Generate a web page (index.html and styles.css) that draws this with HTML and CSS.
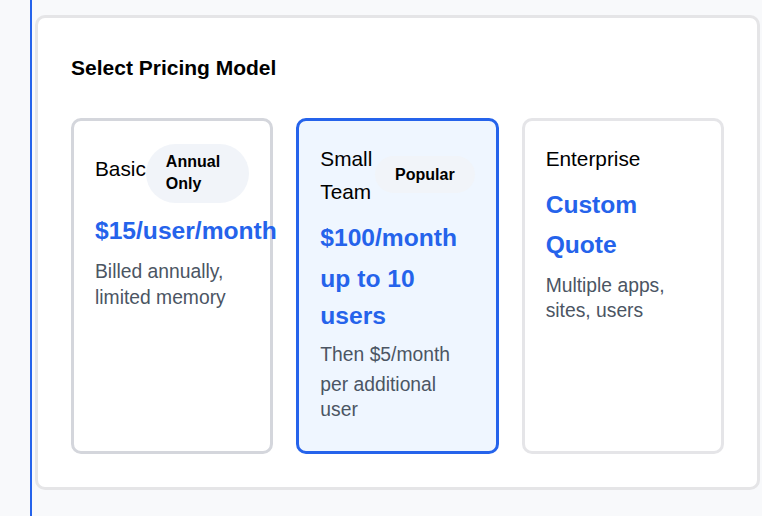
FILE: index.html
```html
<!DOCTYPE html>
<html lang="en">
<head>
<meta charset="utf-8">
<title>Select Pricing Model</title>
<link rel="stylesheet" href="styles.css">
</head>
<body>
<main class="shell">
  <section class="panel">
    <h2 class="panel-title">Select Pricing Model</h2>
    <div class="plans">
      <div class="plan">
        <div class="plan-head">
          <span class="plan-name">Basic</span>
          <span class="badge">Annual Only</span>
        </div>
        <div class="plan-price">$15/user/month</div>
        <p class="plan-desc">Billed annually, limited memory</p>
      </div>
      <div class="plan plan-selected">
        <div class="plan-head">
          <span class="plan-name">Small Team</span>
          <span class="badge">Popular</span>
        </div>
        <div class="plan-price">$100/month <span class="price-sub">up to 10 users</span></div>
        <p class="plan-desc"><span class="desc-lead">Then $5/month</span> per additional user</p>
      </div>
      <div class="plan plan-muted">
        <div class="plan-head">
          <span class="plan-name">Enterprise</span>
        </div>
        <div class="plan-price">Custom Quote</div>
        <p class="plan-desc">Multiple apps, sites, users</p>
      </div>
    </div>
  </section>
</main>
</body>
</html>
```
FILE: styles.css
```css
* { box-sizing: border-box; }

html, body {
  margin: 0;
  padding: 0;
  background: #f8f9fb;
  font-family: "Liberation Sans", Arial, sans-serif;
  color: #000;
}

.shell {
  margin-left: 30px;
  border-left: 2.5px solid #2563eb;
  padding: 15px 2px 0 3px;
  min-height: 100vh;
}

.panel {
  background: #fff;
  border: 3px solid #e5e5e7;
  border-radius: 10px;
  padding: 33px 33px 33px 32px;
}

.panel-title {
  margin: 0 0 33px 1px;
  font-size: 21px;
  line-height: 1.6;
  font-weight: 700;
}

.plans {
  display: grid;
  grid-template-columns: repeat(3, minmax(0, 1fr));
  gap: 23px;
  padding-left: 1px;
}

.plan {
  border: 3px solid #d4d6dc;
  border-radius: 10px;
  background: #fff;
  padding: 21px 21px 29px;
}

.plan-selected {
  border-color: #2563eb;
  background: #eff6ff;
}

.plan-muted {
  border-color: #e5e5e8;
}

.plan-head {
  display: flex;
  align-items: center;
}

.plan-name {
  font-size: 20.8px;
  line-height: 1.6;
}

.badge {
  background: #f1f4f9;
  border-radius: 9999px;
  padding: 7.5px 20px;
  font-size: 16px;
  line-height: 22px;
  font-weight: 700;
}

.plan:first-child .plan-head {
  margin-top: 2px;
  align-items: flex-start;
}

.plan:first-child .plan-name {
  margin-top: 8px;
}

.plan-price {
  margin-top: 10px;
  font-size: 24.6px;
  line-height: 40px;
  font-weight: 700;
  color: #2563eb;
  white-space: nowrap;
}

.plan:first-child .plan-price {
  margin-top: 8px;
}

.price-sub {
  display: block;
  white-space: normal;
  margin-top: 3px;
  line-height: 36.5px;
}

.plan-muted .plan-price {
  white-space: normal;
}

.plan-desc {
  margin: 8px 0 0;
  font-size: 19.3px;
  line-height: 25px;
  color: #4b5563;
}

.plan:first-child .plan-desc {
  line-height: 26px;
}

.desc-lead {
  display: block;
  margin-bottom: 5px;
}
```
